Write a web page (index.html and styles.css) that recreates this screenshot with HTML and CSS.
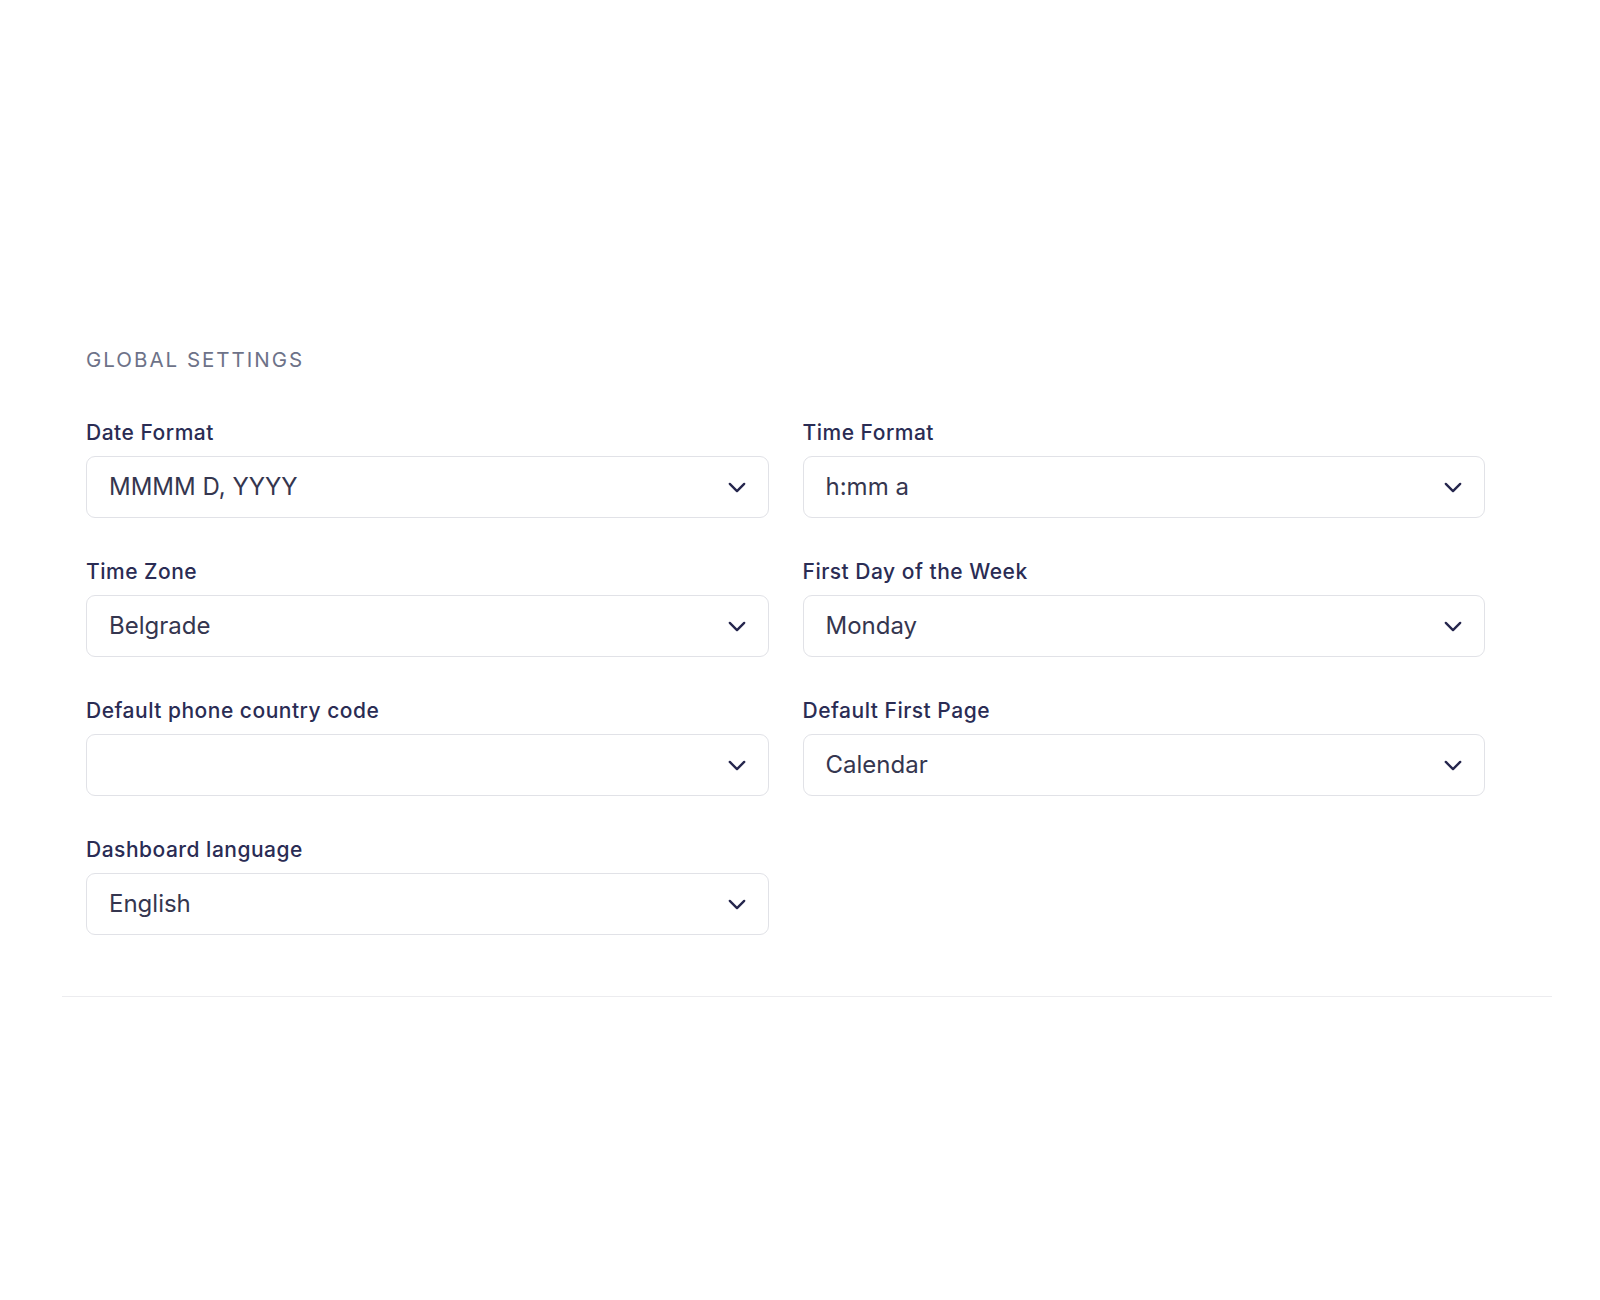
FILE: index.html
```html
<!DOCTYPE html>
<html lang="en">
<head>
<meta charset="utf-8">
<title>Global Settings</title>
<link rel="stylesheet" href="styles.css">
</head>
<body>
<main class="page">
  <section class="section">
    <h2 class="section-title">GLOBAL SETTINGS</h2>
    <div class="grid">
      <div class="field">
        <label class="label">Date Format</label>
        <div class="select"><span class="value">MMMM D, YYYY</span><svg class="chev" viewBox="0 0 20 12"><path d="M2 2l8 8 8-8"/></svg></div>
      </div>
      <div class="field">
        <label class="label">Time Format</label>
        <div class="select"><span class="value">h:mm a</span><svg class="chev" viewBox="0 0 20 12"><path d="M2 2l8 8 8-8"/></svg></div>
      </div>
      <div class="field">
        <label class="label">Time Zone</label>
        <div class="select"><span class="value">Belgrade</span><svg class="chev" viewBox="0 0 20 12"><path d="M2 2l8 8 8-8"/></svg></div>
      </div>
      <div class="field">
        <label class="label">First Day of the Week</label>
        <div class="select"><span class="value">Monday</span><svg class="chev" viewBox="0 0 20 12"><path d="M2 2l8 8 8-8"/></svg></div>
      </div>
      <div class="field">
        <label class="label">Default phone country code</label>
        <div class="select"><span class="value"></span><svg class="chev" viewBox="0 0 20 12"><path d="M2 2l8 8 8-8"/></svg></div>
      </div>
      <div class="field">
        <label class="label">Default First Page</label>
        <div class="select"><span class="value">Calendar</span><svg class="chev" viewBox="0 0 20 12"><path d="M2 2l8 8 8-8"/></svg></div>
      </div>
      <div class="field">
        <label class="label">Dashboard language</label>
        <div class="select"><span class="value">English</span><svg class="chev" viewBox="0 0 20 12"><path d="M2 2l8 8 8-8"/></svg></div>
      </div>
    </div>
  </section>
</main>
</body>
</html>
```

FILE: styles.css
```css
html, body {
  margin: 0;
  padding: 0;
  background: #ffffff;
}

body {
  font-family: Inter, "Noto Sans", "Liberation Sans", sans-serif;
  color: #25264d;
}

.page {
  padding-top: 346px;
}

.section {
  margin: 0 48px 0 62px;
  padding: 0 67px 61px 24px;
  border-bottom: 1px solid #ececef;
}

.section-title {
  margin: 0 0 45px 0;
  font-size: 20.5px;
  line-height: 28px;
  font-weight: 400;
  letter-spacing: 2px;
  color: #6d7288;
}

.grid {
  display: grid;
  grid-template-columns: 1fr 1fr;
  column-gap: 34px;
  row-gap: 40px;
}

.field {
  display: flex;
  flex-direction: column;
  gap: 9px;
}

.label {
  font-size: 21px;
  line-height: 28px;
  font-weight: 450;
  letter-spacing: 0.5px;
  color: #2a2c54;
}

.select {
  height: 62px;
  box-sizing: border-box;
  border: 1px solid #e1e2e7;
  border-radius: 9px;
  display: flex;
  align-items: center;
  justify-content: space-between;
  padding: 0 22px 0 22px;
}

.value {
  font-size: 24px;
  line-height: 30px;
  color: #35364f;
}

.chev {
  width: 18px;
  height: 11px;
  fill: none;
  stroke: #25264d;
  stroke-width: 2.6;
  stroke-linecap: round;
  stroke-linejoin: round;
}
```
